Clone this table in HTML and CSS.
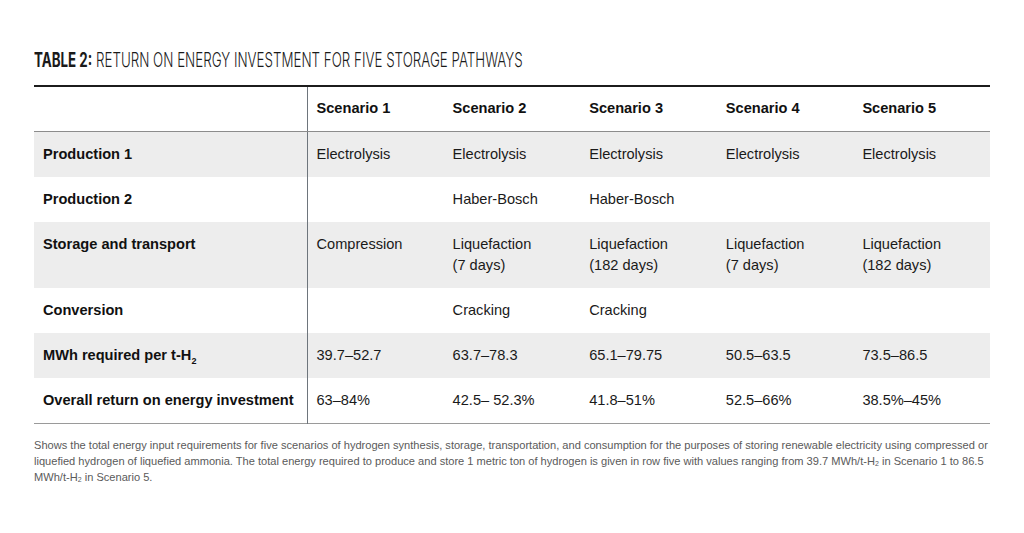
FILE: index.html
```html
<!DOCTYPE html>
<html>
<head>
<meta charset="utf-8">
<link rel="stylesheet" href="styles.css">
</head>
<body>
<div class="page">
  <h1 class="title"><span class="title-inner"><b>TABLE 2:</b> RETURN ON ENERGY INVESTMENT FOR FIVE STORAGE PATHWAYS</span></h1>
  <table class="roi">
    <colgroup>
      <col class="c-label"><col class="c-s"><col class="c-s"><col class="c-s"><col class="c-s"><col class="c-s">
    </colgroup>
    <thead>
      <tr>
        <th class="label"></th>
        <th class="first">Scenario 1</th>
        <th>Scenario 2</th>
        <th>Scenario 3</th>
        <th>Scenario 4</th>
        <th>Scenario 5</th>
      </tr>
    </thead>
    <tbody>
      <tr class="shade">
        <th class="label">Production 1</th>
        <td class="first">Electrolysis</td>
        <td>Electrolysis</td>
        <td>Electrolysis</td>
        <td>Electrolysis</td>
        <td>Electrolysis</td>
      </tr>
      <tr>
        <th class="label">Production 2</th>
        <td class="first"></td>
        <td>Haber-Bosch</td>
        <td>Haber-Bosch</td>
        <td></td>
        <td></td>
      </tr>
      <tr class="shade tall">
        <th class="label">Storage and transport</th>
        <td class="first">Compression</td>
        <td>Liquefaction<br>(7 days)</td>
        <td>Liquefaction<br>(182 days)</td>
        <td>Liquefaction<br>(7 days)</td>
        <td>Liquefaction<br>(182 days)</td>
      </tr>
      <tr>
        <th class="label">Conversion</th>
        <td class="first"></td>
        <td>Cracking</td>
        <td>Cracking</td>
        <td></td>
        <td></td>
      </tr>
      <tr class="shade">
        <th class="label">MWh required per t-H<sub>2</sub></th>
        <td class="first">39.7–52.7</td>
        <td>63.7–78.3</td>
        <td>65.1–79.75</td>
        <td>50.5–63.5</td>
        <td>73.5–86.5</td>
      </tr>
      <tr>
        <th class="label">Overall return on energy investment</th>
        <td class="first">63–84%</td>
        <td>42.5– 52.3%</td>
        <td>41.8–51%</td>
        <td>52.5–66%</td>
        <td>38.5%–45%</td>
      </tr>
    </tbody>
  </table>
  <p class="caption">Shows the total energy input requirements for five scenarios of hydrogen synthesis, storage, transportation, and consumption for the purposes of storing renewable electricity using compressed or liquefied hydrogen of liquefied ammonia. The total energy required to produce and store 1 metric ton of hydrogen is given in row five with values ranging from 39.7 MWh/t-H<sub>2</sub> in Scenario 1 to 86.5 MWh/t-H<sub>2</sub> in Scenario 5.</p>
</div>
</body>
</html>
```
FILE: styles.css
```css
html, body {
  margin: 0;
  padding: 0;
  background: #ffffff;
}

.page {
  width: 956px;
  padding: 47px 0 0 34px;
  font-family: "Liberation Sans", Arial, sans-serif;
  color: #111;
}

.title {
  margin: 0;
  height: 38px;
  font-family: Inter, "Liberation Sans", sans-serif;
  font-weight: 300;
  font-size: 19.5px;
  line-height: 26px;
  color: #1a1a1a;
  white-space: nowrap;
}

.title-inner {
  display: inline-block;
  transform: scaleX(0.685);
  transform-origin: left center;
}

.title b {
  font-weight: 700;
}

.roi {
  width: 956px;
  border-collapse: collapse;
  table-layout: fixed;
  border-top: 2px solid #1c1c1c;
  border-bottom: 1px solid #9a9a9a;
  font-size: 14.6px;
  line-height: 21px;
}

.c-label { width: 273px; }
.c-s { width: 136.6px; }

.roi th, .roi td {
  text-align: left;
  vertical-align: top;
  padding: 12px 9px 12px 9px;
  height: 21px;
}

.roi thead th {
  font-weight: 700;
  padding: 11px 9px 12px 9px;
  border-bottom: 1px solid #8c8c8c;
}

.roi tbody th {
  font-weight: 700;
}

.roi tbody td {
  font-weight: 400;
  color: #1a1a1a;
  word-spacing: 0;
}

.roi .first {
  border-left: 1.5px solid #6e757c;
}

.roi tr.shade th, .roi tr.shade td {
  background: #ededed;
}

.roi tr.tall td, .roi tr.tall th {
  height: 41px;
}

.roi sub {
  font-size: 9px;
  line-height: 0;
  vertical-align: -4px;
}

.caption {
  margin: 13px 0 0 0;
  width: 962px;
  font-size: 11.08px;
  line-height: 16px;
  color: #5a5a5a;
}

.caption sub {
  font-size: 7px;
  line-height: 0;
  vertical-align: -1px;
}
```
